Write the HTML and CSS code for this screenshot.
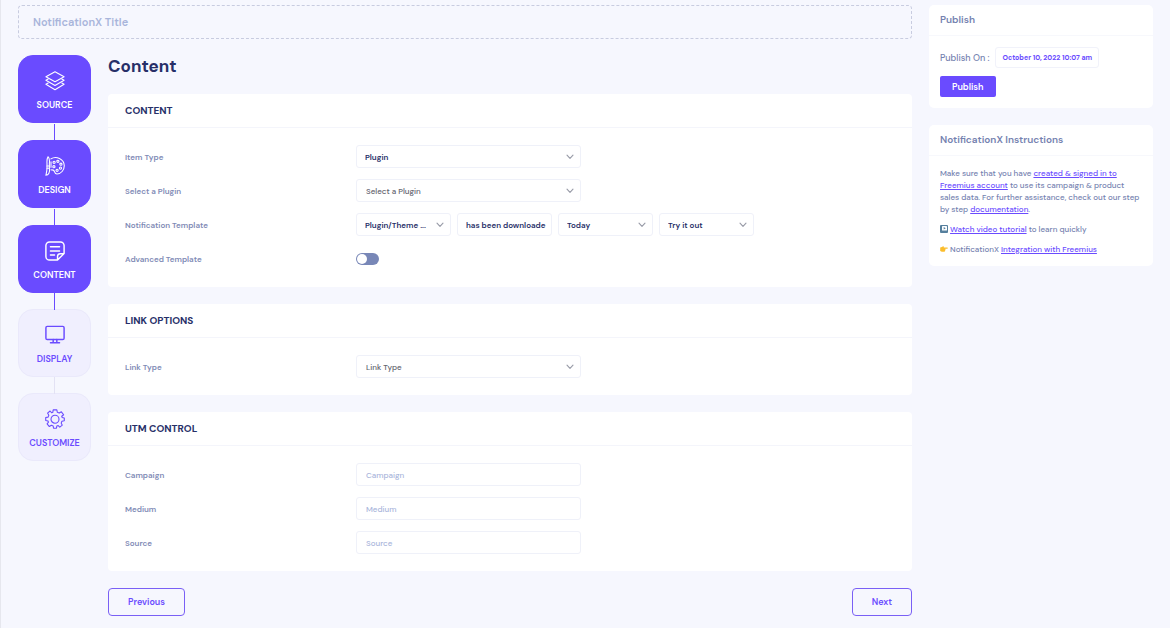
FILE: index.html
```html
<!DOCTYPE html>
<html lang="en">
<head>
<meta charset="utf-8">
<meta name="viewport" content="width=device-width, initial-scale=1">
<title>NotificationX</title>
<link rel="stylesheet" href="styles.css">
</head>
<body>
<svg class="sprite" aria-hidden="true">
  <symbol id="chevron" viewBox="0 0 8 6"><path d="M1 1.2 4 4.4 7 1.2" fill="none" stroke="currentColor" stroke-width="1.1" stroke-linecap="round" stroke-linejoin="round"/></symbol>
</svg>
<div class="page">
  <main class="main">
    <input class="title-input" type="text" placeholder="NotificationX Title" aria-label="NotificationX Title">
    <div class="builder">
      <nav class="steps" aria-label="Steps">
        <button class="step active" type="button">
          <svg class="step-icon" viewBox="0 0 22 22"><path d="M11 .8 21 6.300 11 11.800 1 6.300Z"/><path d="M3.500 8.800 1 10.200 11 16 21 10.200 18.500 8.800"/><path d="M3.500 13.200 1 14.600 11 20.600 21 14.600 18.500 13.200"/></svg>
          <span>SOURCE</span>
        </button>
        <button class="step active" type="button">
          <svg class="step-icon" viewBox="0 0 22 22"><path d="M3.300 .8C5 2.400 5.200 5 4.800 8V13.500H2.200V8C2 5 2.200 2.600 3.300 .8Z"/><path d="M2.200 13.500C2.200 16 1.500 19 1 21.200 4 21.200 5.600 18 4.800 13.500M2.200 11H4.800"/><path d="M6.500 3.200C12-.5 21.200 3 21.200 10.800 21.200 15.500 17.500 19.800 13.200 19.800 10.500 19.800 10.800 17.200 9.800 16 8.800 14.800 7.800 15.600 6.600 15.200M6.600 6.500V12.500"/><circle cx="10" cy="7" r="1.200"/><circle cx="14.200" cy="5.800" r="1.200"/><circle cx="17.500" cy="9" r="1.200"/><circle cx="17" cy="13.300" r="1.200"/><circle cx="13.300" cy="15.800" r="1.200"/><circle cx="9.800" cy="11.800" r="1.200"/></svg>
          <span>DESIGN</span>
        </button>
        <button class="step active" type="button">
          <svg class="step-icon bold" viewBox="0 0 22 22"><path d="M13.800 21H5A4 4 0 0 1 1 17V5A4 4 0 0 1 5 1H17A4 4 0 0 1 21 5V13.800L13.800 21V17A3 3 0 0 1 16.800 14H20.800M6 6.400H16M6 11H16M6 15.500H10.500"/></svg>
          <span>CONTENT</span>
        </button>
        <button class="step next-up" type="button">
          <svg class="step-icon bold" viewBox="0 0 22 22"><rect x="1" y="1.500" width="20" height="14.500" rx="1.500"/><path d="M9 16V19M13 16V19M6 19.500H16"/></svg>
          <span>DISPLAY</span>
        </button>
        <button class="step" type="button">
          <svg class="step-icon" viewBox="0 0 22 22"><path d="M9 1H13L13.600 3.700 15.600 4.500 18 3.100 20.500 6.300 18.400 8 18.800 9.300 21.200 10V13L18.600 13.500 17.800 15.500 19 17.800 16.300 20 14.500 18.200 13 18.800 12.600 21.200H9.400L9 18.700 7 17.900 4.800 19.300 2.300 16.300 3.800 14.500 3.300 13.200 .8 12.600V9.400L3.400 8.900 4.200 6.800 2.800 4.500 5.600 2.200 7.400 4.200 8.600 3.700Z"/><circle cx="11" cy="11.200" r="4.400"/></svg>
          <span>CUSTOMIZE</span>
        </button>
      </nav>

      <div class="content">
        <h1 class="heading">Content</h1>

        <section class="card">
          <h2 class="card-title">CONTENT</h2>
          <div class="rows">
            <div class="row">
              <label for="item-type">Item Type</label>
              <div class="select wide"><select id="item-type" class="strong"><option>Plugin</option></select><svg class="chevron"><use href="#chevron"/></svg></div>
            </div>
            <div class="row">
              <label for="plugin">Select a Plugin</label>
              <div class="select wide"><select id="plugin"><option>Select a Plugin</option></select><svg class="chevron"><use href="#chevron"/></svg></div>
            </div>
            <div class="row">
              <label for="tpl-1">Notification Template</label>
              <div class="template">
                <div class="select"><select id="tpl-1" class="strong"><option>Plugin/Theme ...</option></select><svg class="chevron"><use href="#chevron"/></svg></div>
                <input class="field strong" type="text" value="has been downloade" aria-label="Template text">
                <div class="select"><select class="strong" aria-label="Period"><option>Today</option></select><svg class="chevron"><use href="#chevron"/></svg></div>
                <div class="select"><select class="strong" aria-label="Call to action"><option>Try it out</option></select><svg class="chevron"><use href="#chevron"/></svg></div>
              </div>
            </div>
            <div class="row">
              <label for="advanced">Advanced Template</label>
              <input id="advanced" class="toggle" type="checkbox" role="switch">
            </div>
          </div>
        </section>

        <section class="card">
          <h2 class="card-title">LINK OPTIONS</h2>
          <div class="rows">
            <div class="row">
              <label for="link-type">Link Type</label>
              <div class="select wide"><select id="link-type"><option>Link Type</option></select><svg class="chevron"><use href="#chevron"/></svg></div>
            </div>
          </div>
        </section>

        <section class="card">
          <h2 class="card-title">UTM CONTROL</h2>
          <div class="rows">
            <div class="row"><label for="campaign">Campaign</label><input id="campaign" class="field wide" type="text" placeholder="Campaign"></div>
            <div class="row"><label for="medium">Medium</label><input id="medium" class="field wide" type="text" placeholder="Medium"></div>
            <div class="row"><label for="source">Source</label><input id="source" class="field wide" type="text" placeholder="Source"></div>
          </div>
        </section>

        <div class="pager">
          <button class="outline" type="button">Previous</button>
          <button class="outline" type="button">Next</button>
        </div>
      </div>
    </div>
  </main>

  <aside class="side">
    <section class="panel">
      <h2 class="panel-title">Publish</h2>
      <div class="panel-body publish">
        <div class="publish-on"><span>Publish On :</span><button class="date" type="button">October 10, 2022 10:07 am</button></div>
        <button class="primary" type="button">Publish</button>
      </div>
    </section>
    <section class="panel">
      <h2 class="panel-title">NotificationX Instructions</h2>
      <div class="panel-body instructions">
        <p>Make sure that you have <a href="#">created &amp; signed in to Freemius account</a> to use its campaign &amp; product sales data. For further assistance, check out our step by step <a href="#">documentation</a>.</p>
        <p><svg class="mark" viewBox="0 0 8 8"><rect width="8" height="8" rx="1" fill="#557f9d"/><rect x="2" y="1" width="5" height="4.600" rx=".6" fill="#fff"/><path d="M3.700 2v2.600L5.800 3.300Z" fill="#557f9d"/></svg> <a href="#">Watch video tutorial</a> to learn quickly</p>
        <p><svg class="mark" viewBox="0 0 8 8"><path d="M.2 2.600C1.500 2.400 2.400 1.300 3.300 1.200 4 1.200 4 2 3.700 2.500H7.300C8 2.500 8 3.700 7.300 3.700H5.200C5.800 4 5.600 4.700 5.200 4.800 5.500 5.300 5.200 5.800 4.900 5.900 4.900 6.600 4.400 6.800 4 6.800H1.800L.2 6.100Z" fill="#fbbd2c"/></svg> NotificationX <a href="#">Integration with Freemius</a></p>
      </div>
    </section>
  </aside>
</div>
</body>
</html>
```
FILE: styles.css
```css
* { box-sizing: border-box; }
body {
  margin: 0;
  background: #f6f7fe;
  border-left: 1px solid #e6e7ee;
  min-height: 100vh;
  color: #7582b0;
  font: 500 8px/12px "DM Sans", Inter, "Open Sans", sans-serif;
}
button, input, select { font: inherit; margin: 0; }
h1, h2, p { margin: 0; }
.sprite { position: absolute; width: 0; height: 0; }
.page {
  display: grid;
  grid-template-columns: minmax(0, 1fr) 224px;
  gap: 17px;
  padding: 5px 17px 12px;
  align-items: start;
}
.title-input {
  display: block;
  width: 100%;
  height: 34px;
  padding: 0 14px;
  border: 1px dashed #c8cce0;
  border-radius: 4px;
  background: transparent;
  font-size: 11px;
  font-weight: 600;
  color: #2b3566;
}
.title-input::placeholder { color: #a9b5db; opacity: 1; }
.builder {
  display: grid;
  grid-template-columns: 73px minmax(0, 1fr);
  gap: 17px;
  margin-top: 16px;
  align-items: start;
}
.steps { display: flex; flex-direction: column; }
.step {
  position: relative;
  display: flex;
  flex-direction: column;
  align-items: center;
  justify-content: center;
  gap: 8px;
  height: 68px;
  padding: 3px 0 0;
  border: 1px solid #eae9fb;
  border-radius: 15px;
  background: #f0effe;
  color: #6a4bff;
  font-size: 9px;
  font-weight: 600;
  line-height: 12px;
}
.step + .step { margin-top: 16px; }
.step + .step.active { margin-top: 17px; }
.step + .step::before {
  content: "";
  position: absolute;
  bottom: 100%;
  left: calc(50% - 1px);
  width: 1px;
  height: 17px;
  background: #e3e2f4;
}
.step + .step.active::before, .step + .step.next-up::before { background: #6a4bff; }
.step.active { background: #6a4bff; border-color: #6a4bff; color: #fff; }
.step-icon {
  width: 20px;
  height: 20px;
  fill: none;
  stroke: currentColor;
  stroke-width: 1.2;
  stroke-linecap: round;
  stroke-linejoin: round;
}
.step-icon.bold { stroke-width: 1.6; }
.content { display: flex; flex-direction: column; gap: 17px; }
.heading {
  font-size: 17px;
  line-height: 22px;
  font-weight: 700;
  color: #272f68;
}
.card { background: #fff; border-radius: 4px; }
.card-title {
  height: 34px;
  padding: 0 17px;
  border-bottom: 1px solid #f4f5fb;
  font-size: 10px;
  line-height: 34px;
  font-weight: 700;
  color: #272f68;
}
.rows { display: grid; gap: 11px; padding: 17px; }
.row {
  display: grid;
  grid-template-columns: 30% minmax(0, 1fr);
  align-items: center;
  min-height: 23px;
}
.row label { font-weight: 600; color: #7f8bb6; }
.wide { width: 225px; max-width: 100%; }
.select { position: relative; }
.select select, .field {
  display: block;
  height: 23px;
  padding: 0 9px;
  border: 1px solid #eff1f9;
  border-radius: 3px;
  background: #fff;
  color: #62636e;
  appearance: none;
}
.select select { width: 100%; }
.field::placeholder { color: #a9b5db; opacity: 1; }
.select .strong, .field.strong { padding: 0 4px 0 8px; color: #272f68; font-weight: 600; }
.chevron {
  position: absolute;
  right: 7px;
  top: 9px;
  width: 8px;
  height: 6px;
  color: #979aa6;
  pointer-events: none;
}
.template {
  display: grid;
  grid-template-columns: repeat(4, 95px);
  gap: 6px;
}
.template .field { width: 100%; }
.toggle {
  appearance: none;
  width: 23px;
  height: 12px;
  border-radius: 6px;
  background: #7887b7;
  padding: 1px;
}
.toggle::before {
  content: "";
  display: block;
  width: 10px;
  height: 10px;
  border-radius: 50%;
  background: #fff;
}
.toggle:checked::before { margin-left: auto; }
.pager { display: flex; justify-content: space-between; }
.outline {
  height: 28px;
  padding: 0 19px;
  border: 1px solid #7a60f5;
  border-radius: 4px;
  background: transparent;
  color: #6a4bff;
  font-size: 9px;
  font-weight: 600;
}
.side { display: grid; gap: 17px; }
.panel { background: #fff; border-radius: 5px; }
.panel-title {
  height: 31px;
  padding: 0 11px;
  border-bottom: 1px solid #f7f8fc;
  font-size: 10px;
  line-height: 30px;
  font-weight: 600;
}
.panel-body { padding: 11px; }
.publish { display: grid; gap: 8px; justify-items: start; }
.publish-on { display: flex; align-items: center; gap: 6px; font-size: 9px; }
.date {
  height: 21px;
  padding: 0 6px;
  border: 1px solid #f1f2fa;
  border-radius: 3px;
  background: #fff;
  color: #6a4bff;
  font-size: 7px;
  font-weight: 700;
}
.primary {
  height: 21px;
  padding: 0 12px;
  border: 0;
  border-radius: 2px;
  background: #6a4bff;
  color: #fff;
  font-size: 9px;
  font-weight: 600;
}
.instructions { display: grid; gap: 8px; }
.instructions a { color: #6a4bff; }
.mark { width: 8px; height: 8px; vertical-align: -1px; }
```
